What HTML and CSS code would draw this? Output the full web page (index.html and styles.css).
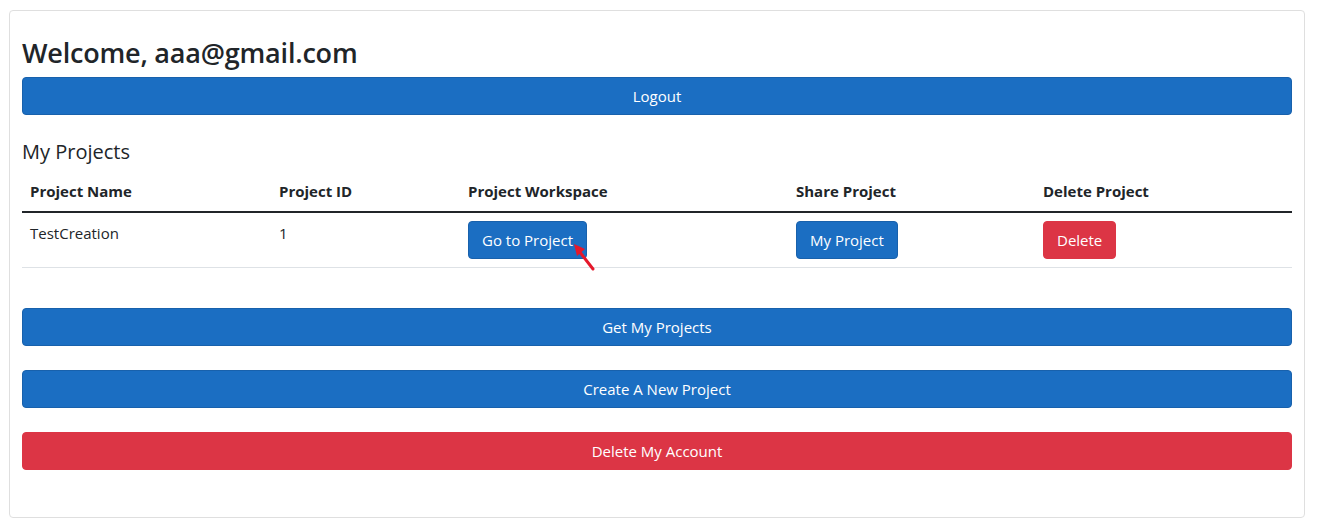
FILE: index.html
```html
<!DOCTYPE html>
<html lang="en">
<head>
<meta charset="utf-8">
<title>My Projects</title>
<link rel="stylesheet" href="styles.css">
</head>
<body>
<div class="card">
  <h3 class="welcome">Welcome, aaa@gmail.com</h3>
  <button class="btn btn-primary btn-block">Logout</button>
  <h5 class="section-title">My Projects</h5>
  <table class="table">
    <thead>
      <tr>
        <th class="c1">Project Name</th>
        <th class="c2">Project ID</th>
        <th class="c3">Project Workspace</th>
        <th class="c4">Share Project</th>
        <th class="c5">Delete Project</th>
      </tr>
    </thead>
    <tbody>
      <tr>
        <td>TestCreation</td>
        <td>1</td>
        <td class="cursor-cell"><button class="btn btn-primary btn-inline">Go to Project</button>
          <svg class="pointer" width="24" height="30" viewBox="0 0 24 30">
            <line x1="20" y1="26" x2="6" y2="8" stroke="#e5182b" stroke-width="3" stroke-linecap="round"/>
            <polygon points="1,1 12,6 4,13" fill="#e5182b"/>
          </svg>
        </td>
        <td><button class="btn btn-primary btn-inline">My Project</button></td>
        <td><button class="btn btn-danger btn-inline">Delete</button></td>
      </tr>
    </tbody>
  </table>
  <div class="actions">
    <button class="btn btn-primary btn-block">Get My Projects</button>
    <button class="btn btn-primary btn-block">Create A New Project</button>
    <button class="btn btn-danger btn-block">Delete My Account</button>
  </div>
</div>
</body>
</html>
```
FILE: styles.css
```css
html, body {
  margin: 0;
  padding: 0;
  background: #fff;
}
body {
  font-family: "Open Sans", "Noto Sans", "Liberation Sans", sans-serif;
  color: #212529;
  font-size: 15px;
  line-height: 24px;
}
.card {
  margin: 10px 14px 0 9px;
  border: 1px solid #dfdfdf;
  border-radius: 4px;
  padding: 25px 12px 47px 12px;
}
.welcome {
  margin: 0 0 7px 0;
  font-size: 27px;
  line-height: 34px;
  font-weight: 600;
  letter-spacing: -0.2px;
}
.btn {
  font-family: inherit;
  font-size: 15px;
  line-height: 24px;
  padding: 6px 12px;
  border: 1px solid transparent;
  border-radius: 4px;
  color: #fff;
  cursor: pointer;
}
.btn-inline {
  padding: 6px 13px;
}
.btn-primary {
  background: #1b6ec2;
  border-color: #1861ac;
}
.btn-danger {
  background: #dc3545;
  border-color: #dc3545;
}
.btn-block {
  display: block;
  width: 100%;
}
.section-title {
  margin: 25px 0 7px 0;
  font-size: 20px;
  line-height: 24px;
  font-weight: 500;
}
.table {
  width: 100%;
  border-collapse: collapse;
  table-layout: fixed;
}
.table th, .table td {
  text-align: left;
  padding: 8px;
  vertical-align: top;
}
.table th {
  font-weight: 700;
  font-size: 15px;
  border-bottom: 2px solid #212529;
}
.table td {
  border-bottom: 1px solid #dee2e6;
}
.c1 { width: 233px; }
.c2 { width: 173px; }
.c3 { width: 312px; }
.c4 { width: 231px; }
.cursor-cell {
  position: relative;
}
.pointer {
  position: absolute;
  left: 113px;
  top: 30px;
}
.actions {
  margin-top: 40px;
  display: flex;
  flex-direction: column;
  gap: 24px;
}
```
